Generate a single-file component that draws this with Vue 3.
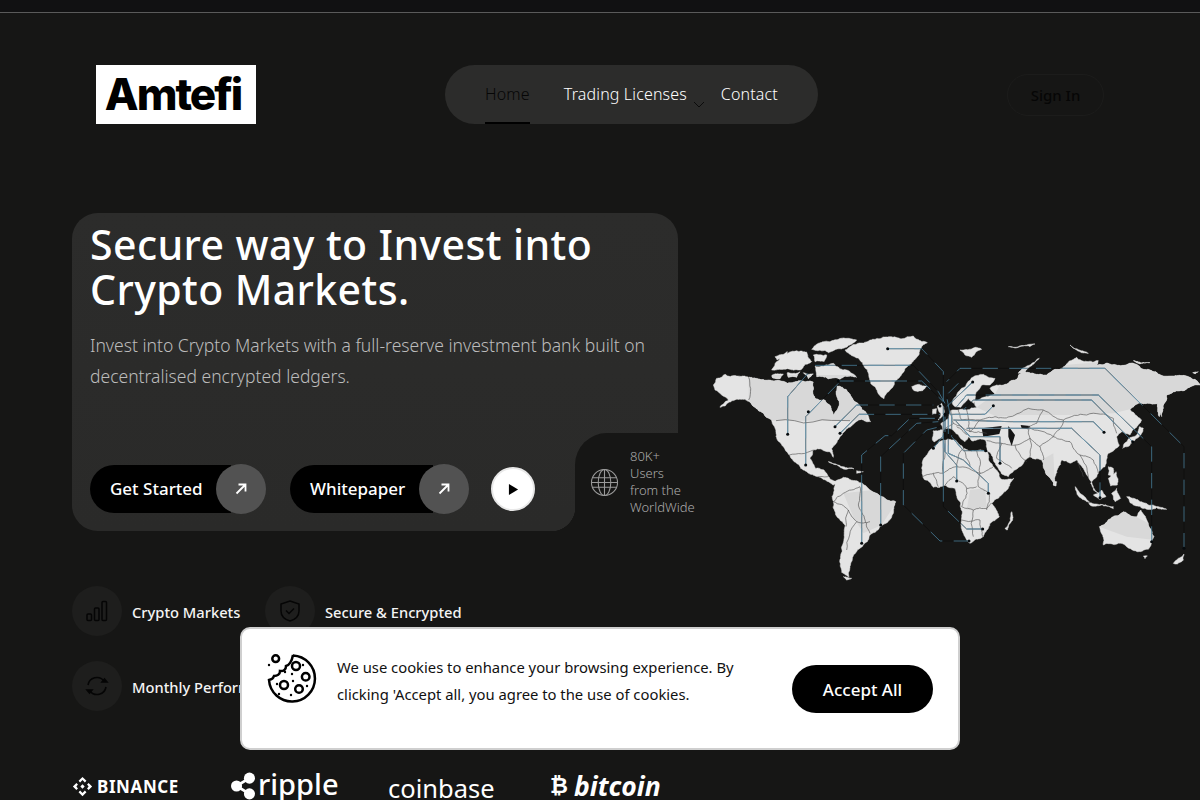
<script setup>
const baseLand = [
  // North America
  '40,195 50,175 75,163 110,168 145,172 180,178 210,180 240,182 262,190 300,182 340,186 338,215 345,235 375,240 392,258 400,285 412,270 418,245 408,215 412,198 440,210 455,232 478,255 500,280 512,305 485,298 468,305 450,322 428,340 412,362 395,385 400,412 388,395 365,388 340,390 330,415 345,445 372,450 385,470 415,490 400,495 385,485 355,470 320,455 290,430 268,405 250,380 228,350 215,300 190,280 165,262 135,238 105,240 75,258 60,262 85,240 65,225 45,210',
  // Greenland
  '435,90 470,72 510,60 570,50 640,48 682,68 662,85 648,115 615,145 600,170 575,205 552,236 535,222 512,190 502,150 488,128 458,108',
  // South America
  '408,482 430,472 470,482 500,500 530,520 587,545 577,585 547,615 517,640 502,665 472,690 457,720 447,772 425,757 422,715 433,650 436,615 403,570 396,530',
  // Africa
  '665,445 680,405 700,382 725,362 765,360 790,385 830,392 862,395 880,440 905,478 942,475 925,505 895,535 875,550 898,590 870,610 850,650 810,670 795,650 785,600 782,550 765,505 735,495 700,502 672,478',
  // Eurasia
  '697,360 700,332 728,330 722,312 745,295 752,272 775,270 800,270 830,262 822,240 850,232 885,222 870,205 890,195 925,190 950,178 965,155 1000,160 1040,165 1060,150 1095,138 1130,112 1195,122 1190,135 1250,135 1300,130 1350,150 1420,168 1470,172 1500,195 1440,212 1400,225 1385,265 1378,290 1372,250 1345,250 1315,250 1290,268 1325,300 1310,322 1290,345 1265,335 1250,350 1258,375 1225,400 1215,440 1195,460 1172,490 1195,520 1180,510 1165,470 1150,445 1130,420 1110,430 1085,420 1065,470 1062,497 1040,465 1025,420 990,410 975,420 960,440 925,470 905,462 880,420 862,392 858,362 815,362 805,350 795,365 775,345 750,325 735,325 728,355 702,366',
  // Scandinavia
  '757,250 775,215 810,180 850,163 885,175 870,195 845,195 830,215 822,250 805,235 792,250 782,262 762,258',
  // UK / Ireland / Iceland
  '712,258 725,250 732,285 715,300 722,280', '698,268 710,266 708,282 696,284', '635,200 655,193 680,198 668,212 642,212',
  // Australia / NZ / Madagascar
  '1198,620 1235,592 1270,575 1310,590 1322,570 1345,610 1362,650 1345,688 1305,692 1270,672 1210,675', '1420,730 1445,710 1452,702 1450,720 1432,732', '915,625 935,575 938,600 922,630',
  // Japan, Indonesia, Philippines, Kamchatka
  '1268,385 1300,365 1325,340 1330,325 1318,320 1310,345 1272,372', '1125,500 1168,545 1160,545 1130,515', '1180,525 1205,510 1218,530 1198,538', '1165,548 1240,560 1240,566 1175,558', '1280,530 1345,555 1400,568 1340,568 1290,548', '1225,475 1248,455 1252,495 1232,498', '1235,520 1250,505 1262,535 1245,545', '1225,440 1240,445 1238,470 1225,465', '1062,482 1070,485 1068,498 1060,495', '1375,250 1400,235 1385,290',
  // Caribbean
  '385,425 430,440 462,447 420,442', '470,452 490,455 470,460',
  // Canadian arctic
  '215,150 240,112 290,92 320,96 335,125 300,150 250,148', '335,88 370,65 440,55 470,60 430,85 385,98', '345,138 400,130 440,150 470,172 420,178 350,170', '260,222 280,212 272,228 250,230', '310,158 340,162 325,176', '215,168 250,162 240,176 218,174', '262,158 300,155 290,172 265,172', '340,105 380,105 372,125 345,125', '225,110 262,95 255,112 232,120',
  // Arctic Russia / Svalbard
  '780,90 825,82 845,88 815,112 795,105', '925,80 1005,72 990,80 935,82', '955,160 1018,115 1010,122 975,155', '1110,75 1165,100 1130,90', '1300,122 1350,128 1320,132', '1478,158 1495,155 1485,162', '430,770 455,775 440,780', '1330,708 1342,708 1335,716',
]
const tint = [
  '146,165 500,165 500,302 146,302',
  '830,262 885,222 925,150 1500,100 1500,220 1378,290 1315,250 1290,268 1240,280 1100,285 960,285 890,290',
  '430,520 520,510 590,545 545,615 490,640 460,590',
  '810,510 855,505 860,560 800,570',
  '1198,620 1270,570 1345,610 1365,660 1280,650',
  '1025,420 1060,400 1065,500 1040,480',
]
const baseBorders = [
  'M146,172L146,240','M228,302L450,302','M268,405L340,390','M355,470L385,470','M430,520L400,545L445,570L438,620','M430,520L480,500L475,555L495,600L510,640','M445,570L470,605L440,690','M470,605L510,605',
  'M665,470L700,460L730,460L770,440L790,385','M730,460L730,365','M770,440L840,460L880,440','M840,460L835,500L870,520','M700,460L715,500','M735,495L760,470L800,505L830,500','M800,505L785,560L820,570L860,565L875,550','M785,600L840,600L848,650','M820,570L820,650','M870,520L860,570','M790,385L810,440','M830,392L840,460',
  'M752,272L760,310L810,335L840,300L885,290L930,290','M775,270L785,300L840,300','M800,270L810,335','M735,325L760,310','M770,320L800,345','M810,335L860,340','M860,362L905,370L945,375L980,425','M945,375L990,355L1020,380L1030,420','M990,355L990,410','M1020,380L1060,350L1110,365L1140,405','M930,290L985,265L1030,270L1090,300L1160,285L1240,295L1250,340','M1030,270L1010,310L985,320L990,355','M1090,300L1060,350','M985,320L1060,350','M1140,405L1165,470','M1140,405L1180,420L1195,460','M905,370L890,415L935,445','M1130,420L1150,470',
]
function noise(a, b) {
  const v = Math.sin(a * 12.9898 + b * 78.233) * 43758.5453
  return v - Math.floor(v) - 0.5
}
function split(a, b, depth, amp) {
  if (depth === 0) return [a]
  const dx = b[0] - a[0], dy = b[1] - a[1]
  const len = Math.hypot(dx, dy)
  const n = noise(a[0] + b[0], a[1] + b[1]) * len * amp
  const mid = [(a[0] + b[0]) / 2 - (dy / (len || 1)) * n, (a[1] + b[1]) / 2 + (dx / (len || 1)) * n]
  return [...split(a, mid, depth - 1, amp), ...split(mid, b, depth - 1, amp)]
}
const fmt = (pts) => pts.map((p) => p[0].toFixed(1) + ',' + p[1].toFixed(1)).join(' ')
const land = baseLand.map((s) => {
  const pts = s.split(' ').map((p) => p.split(',').map(Number))
  const out = []
  pts.forEach((p, i) => {
    const q = pts[(i + 1) % pts.length]
    out.push(...split(p, q, Math.hypot(q[0] - p[0], q[1] - p[1]) > 25 ? 4 : 2, 0.24))
  })
  return fmt(out)
})
const borders = baseBorders.flatMap((s) => s.split('M').filter(Boolean)).map((s) => {
  const pts = s.split('L').map((p) => p.split(',').map(Number))
  const out = []
  for (let i = 0; i < pts.length - 1; i++) out.push(...split(pts[i], pts[i + 1], 3, 0.2))
  out.push(pts[pts.length - 1])
  return fmt(out)
})
const lineRoutes = [
  'M563,86H665L730,155V283','M345,136H640L715,215L735,250','M263,343V230L345,136','M415,183H665L730,245','M317,435V290L415,190','M405,320L470,255H700','M420,340L477,283H720','M485,670V405L555,347H575L630,295H720','M542,615V410L650,310L715,305','M807,663H720L610,555V400L680,330L720,320','M848,627H800L730,560V285','M700,385L735,340','M770,483V435L735,395V285','M865,520V490L790,420L745,400V285','M857,392H790L755,350V285','M900,430V350H810L765,300','M1212,337L1180,305H930L760,300','M1200,533V405L1115,325H800','M1298,365L1175,240H820L790,270','M1355,665V380L1195,225H800L770,260','M1452,685V380L1215,145H780L740,185','M880,257L855,283H750','M818,186L740,260','M775,190L745,220','M750,283L740,230',
]
const dots = [[563,86],[263,343],[415,183],[317,435],[325,275],[405,320],[420,340],[485,670],[542,615],[807,663],[848,627],[700,385],[770,483],[865,520],[857,392],[900,430],[1212,337],[1200,533],[1298,365],[1355,665],[1452,685],[880,257],[818,186],[735,283],[720,258]]
const features = [
  { label: 'Crypto Markets', icon: 'bars' },
  { label: 'Secure & Encrypted', icon: 'shield' },
  { label: 'Monthly Performance', icon: 'sync' },
]
const rings = [[29,13,4],[38.7,23.7,3.8],[17,32,4],[32,36,3.8],[8.7,5.7,3.4]]
const specks = [[2,12],[18,19],[25,21],[10,31],[26,28],[24,42],[40,33],[36,12],[12,41]]
</script>

<template>
  <div class="page">
    <div class="topbar"></div>
    <header class="header">
      <div class="logo">Amtefi</div>
      <nav class="nav">
        <a class="nav-link active">Home</a>
        <a class="nav-link has-caret">Trading Licenses
          <svg class="caret" viewBox="0 0 12 7" width="12" height="7"><path d="M1 1l5 5 5-5" fill="none" stroke="#0b0b0b" stroke-width="1"/></svg>
        </a>
        <a class="nav-link">Contact</a>
      </nav>
      <button class="signin">Sign In</button>
    </header>

    <section class="hero">
      <div class="card">
        <h1>Secure way to Invest into<br>Crypto Markets.</h1>
        <p class="lead">Invest into Crypto Markets with a full-reserve investment bank built on decentralised encrypted ledgers.</p>
        <div class="actions">
          <a class="pill">Get Started
            <span class="pill-arrow"><svg viewBox="0 0 14 14" width="14" height="14"><path d="M2.5 11.5L11 3M4.5 2.500h7v7" fill="none" stroke="#fff" stroke-width="1.800"/></svg></span>
          </a>
          <a class="pill pill-two">Whitepaper
            <span class="pill-arrow"><svg viewBox="0 0 14 14" width="14" height="14"><path d="M2.5 11.5L11 3M4.5 2.500h7v7" fill="none" stroke="#fff" stroke-width="1.800"/></svg></span>
          </a>
          <span class="play"><svg viewBox="0 0 12 14" width="11" height="13"><path d="M1 1l10 6-10 6z" fill="#000"/></svg></span>
        </div>
        <div class="users">
          <svg viewBox="0 0 30 30" width="29" height="29" fill="none" stroke="#9a9a9a" stroke-width="1.1">
            <circle cx="15" cy="15" r="13.5"/><ellipse cx="15" cy="15" rx="6.5" ry="13.5"/><path d="M15 1.5v27M2.5 10h25M2.5 20h25M1.5 15h27"/>
          </svg>
          <span class="users-text">80K+<br>Users<br>from the<br>WorldWide</span>
        </div>
      </div>

      <svg class="map" viewBox="0 0 1500 810" width="500" height="270">
        <defs>
          <clipPath id="landclip"><polygon v-for="(p, i) in land" :key="i" :points="p"/></clipPath>
        </defs>
        <polygon v-for="(p, i) in land" :key="i" :points="p" fill="#e4e4e4" stroke="#e4e4e4" stroke-width="1.500"/>
        <g clip-path="url(#landclip)">
          <polygon v-for="(p, i) in tint" :key="'t' + i" :points="p" fill="#d8d8d8"/>
        </g>
        <path d="M845,325L905,318L898,342L850,350Z M925,318L945,345L935,378L925,350Z M962,315L990,318L985,328L965,325Z" fill="#161616"/>
        <polyline v-for="(b, i) in borders" :key="'b' + i" :points="b" fill="none" stroke="#4a4a4a" stroke-width="1.800"/>
        <g fill="none" stroke-width="2.200">
          <path v-for="(r, i) in lineRoutes" :key="'k' + i" :d="r" stroke="#0c0c0c"/>
          <path v-for="(r, i) in lineRoutes" :key="'c' + i" :d="r" stroke="#4f8ba8" stroke-dasharray="46 34"/>
          <g clip-path="url(#landclip)">
            <path v-for="(r, i) in lineRoutes" :key="'l' + i" :d="r" stroke="#7fa6ba"/>
          </g>
        </g>
        <circle v-for="(d, i) in dots" :key="'d' + i" :cx="d[0]" :cy="d[1]" r="4.500" fill="#050a0d"/>
      </svg>
    </section>

    <section class="features">
      <div v-for="f in features" :key="f.label" class="feature">
        <span class="feature-icon">
          <svg v-if="f.icon === 'bars'" viewBox="0 0 24 24" width="24" height="24" fill="none" stroke="#050505" stroke-width="1.5">
            <rect x="2" y="15" width="4.5" height="6.5" rx="1"/><rect x="9.5" y="9" width="4.5" height="12.5" rx="1"/><rect x="17" y="2.5" width="4.5" height="19" rx="1"/>
          </svg>
          <svg v-else-if="f.icon === 'shield'" viewBox="0 0 24 24" width="24" height="24" fill="none" stroke="#050505" stroke-width="1.5">
            <path d="M12 2l9 3v7c0 5-4 8.500-9 10-5-1.500-9-5-9-10V5z"/><path d="M8 11.500l3 3 5-5"/>
          </svg>
          <svg v-else viewBox="0 0 24 24" width="24" height="24" fill="none" stroke="#050505" stroke-width="1.6">
            <path d="M3 11a9 9 0 0 1 16-4M21 13a9 9 0 0 1-16 4"/><path d="M17 8h5l-2.500-3zM7 16H2l2.500 3z" fill="#050505"/>
          </svg>
        </span>
        <span class="feature-label">{{ f.label }}</span>
      </div>
    </section>

    <section class="brands">
      <span class="brand binance">
        <svg viewBox="0 0 24 24" width="21" height="21" fill="#fff"><path d="M12 1l4.500 4.500-1.800 1.800L12 4.600 9.300 7.300 7.500 5.500zM5 8l1.800 1.800L5 12l1.800 2.200L5 16l-4-4zM19 8l4 4-4 4-1.800-1.800L19 12l-1.800-2.200zM12 9.500l2.500 2.500-2.500 2.500L9.500 12zM7.500 18.500l1.800-1.800 2.700 2.700 2.700-2.700 1.800 1.800L12 23z"/></svg>
        BINANCE
      </span>
      <span class="brand ripple">
        <svg viewBox="0 0 26 30" width="24" height="28" fill="#fff"><circle cx="6" cy="15" r="6"/><circle cx="20" cy="6.500" r="6"/><circle cx="20" cy="23.500" r="6"/><path d="M6 15L20 6.500M6 15l14 8.500" stroke="#fff" stroke-width="3"/></svg>
        <span class="ripple-word">ripple</span>
      </span>
      <span class="brand coinbase">coinbase</span>
      <span class="brand bitcoin"><span class="btc">₿</span> bitcoin</span>
    </section>

    <aside class="cookie">
      <svg class="cookie-icon" viewBox="0 0 50 50" width="50" height="50" fill="none" stroke="#000" stroke-width="2.500">
        <path d="M26 2.500A23 23 0 1 1 2 27c2.500-.500 4.500-2 5-4 3 0 6-1.500 6-5 4 .500 6-2 6-5 3-.500 6-5 7-11z"/>
        <circle v-for="(c, i) in rings" :key="i" :cx="c[0]" :cy="c[1]" :r="c[2]"/>
        <circle v-for="(s, i) in specks" :key="'s' + i" :cx="s[0]" :cy="s[1]" r="1.200" fill="#000" stroke="none"/>
      </svg>
      <p class="cookie-text">We use cookies to enhance your browsing experience. By clicking 'Accept all, you agree to the use of cookies.</p>
      <button class="accept">Accept All</button>
    </aside>
  </div>
</template>

<style>
html, body { margin: 0; background: #161616; }
</style>

<style scoped>
.page {
  position: relative;
  height: 800px;
  overflow: hidden;
  background: #161615;
  color: #fff;
  font-family: "Noto Sans", sans-serif;
}
.topbar { height: 12px; background: #111112; border-bottom: 1px solid #5a5a5a; }

.header {
  display: flex;
  align-items: flex-start;
  justify-content: space-between;
  padding: 52px 96px 0;
  height: 59px;
}
.logo {
  width: 160px;
  height: 59px;
  box-sizing: border-box;
  padding-right: 6px;
  background: #fff;
  color: #000;
  font: 800 44px/59px Inter, sans-serif;
  letter-spacing: -2px;
  text-align: center;
}
.nav {
  display: flex;
  gap: 34px;
  height: 59px;
  padding: 0 40px;
  border-radius: 30px;
  background: #2c2c2b;
  box-sizing: border-box;
}
.nav-link {
  position: relative;
  font-size: 16px;
  letter-spacing: .15px;
  line-height: 59px;
  color: #fff;
  font-weight: 300;
  white-space: nowrap;
}
.nav-link.active { color: #060606; border-bottom: 2px solid #000; height: 57px; }
.caret { position: absolute; left: 129px; top: 36px; }
.signin {
  margin-top: 9px;
  width: 97px;
  height: 42px;
  border-radius: 21px;
  border: 1px solid #1c1c1b;
  background: transparent;
  color: #060606;
  font: 500 15px "Noto Sans", sans-serif;
}

.hero {
  display: flex;
  align-items: flex-start;
  gap: 22px;
  height: 318px;
  padding-left: 72px;
  margin-top: 89px;
}
.card {
  position: relative;
  flex: none;
  width: 606px;
  height: 318px;
  box-sizing: border-box;
  padding: 9px 18px 0;
  border-radius: 26px;
  background: linear-gradient(180deg, #2c2c2b, #2a2a29);
}
h1 {
  margin: 0;
  font-size: 41px;
  letter-spacing: .4px;
  line-height: 45px;
  font-weight: 500;
  white-space: nowrap;
}
.lead {
  margin: 18px 0 0;
  font-size: 17.500px;
  line-height: 31px;
  color: #bcbcbc;
  font-weight: 300;
  width: 570px;
}
.actions {
  position: absolute;
  left: 18px;
  top: 252px;
  display: flex;
  align-items: center;
}
.pill {
  position: relative;
  width: 176px;
  height: 48px;
  box-sizing: border-box;
  padding-left: 20px;
  border-radius: 24px 0 0 24px;
  font-size: 17px;
  font-weight: 500;
  line-height: 48px;
  background: linear-gradient(90deg, #000 80%, transparent 80%);
}
.pill-two { margin-left: 24px; width: 179px; }
.pill-arrow {
  position: absolute;
  right: 0;
  top: -1px;
  display: flex;
  align-items: center;
  justify-content: center;
  width: 50px;
  height: 50px;
  border-radius: 50%;
  background: #525252;
}
.play {
  display: flex;
  align-items: center;
  justify-content: center;
  margin-left: 22px;
  width: 40px;
  height: 40px;
  border: 2px solid #e8e8e8;
  border-radius: 50%;
  background: #fff;
}
.users {
  position: absolute;
  right: -18px;
  bottom: 0;
  display: flex;
  align-items: center;
  gap: 11px;
  width: 121px;
  height: 98px;
  box-sizing: border-box;
  padding: 0 0 0 15px;
  border-radius: 32px 0 0 0;
  background: #161615;
}
.users::before {
  content: "";
  position: absolute;
  left: -24px;
  bottom: 0;
  width: 24px;
  height: 24px;
  background: radial-gradient(circle at 0 0, #2a2a29 24px, #161615 24.500px);
}
.users-text { font-size: 13px; line-height: 17px; color: #aaa; font-weight: 300; white-space: nowrap; }
.map { flex: none; margin-top: 107px; }

.features {
  display: grid;
  grid-template-columns: 193px 1fr;
  row-gap: 25px;
  padding-left: 72px;
  margin-top: 55px;
}
.feature { display: flex; align-items: center; gap: 10px; height: 50px; }
.feature-icon {
  flex: none;
  display: flex;
  align-items: center;
  justify-content: center;
  width: 50px;
  height: 50px;
  border-radius: 50%;
  background: #1e1e1d;
}
.feature-label { padding-top: 2px; font-size: 14.700px; font-weight: 500; color: #f4f4f4; white-space: nowrap; }

.brands {
  display: flex;
  align-items: center;
  padding-left: 72px;
  margin-top: 59px;
  height: 32px;
  color: #fff;
}
.brand { display: inline-flex; align-items: center; white-space: nowrap; }
.brand svg { flex: none; }
.binance { width: 159px; gap: 4px; font: 700 17px "Noto Sans", sans-serif; letter-spacing: .6px; }
.ripple { width: 157px; gap: 3px; font: 500 29px/32px "Noto Sans", sans-serif; }
.ripple-word { margin-top: -4px; }
.coinbase { width: 162px; padding-top: 3px; font: 400 25.500px/32px "Noto Sans", sans-serif; }
.bitcoin { font: italic 700 26.500px/32px "Noto Sans", sans-serif; gap: 6px; }
.btc { font: 700 22px "DejaVu Sans", sans-serif; }

.cookie {
  position: absolute;
  left: 240px;
  top: 627px;
  width: 720px;
  height: 123px;
  box-sizing: border-box;
  padding: 24px 25px 0 25px;
  display: flex;
  align-items: flex-start;
  border: 2px solid #cfcfcf;
  border-radius: 10px;
  background: #fff;
  color: #111;
}
.cookie-icon { flex: none; }
.cookie-text {
  flex: none;
  width: 425px;
  margin: 1px 0 0 20px;
  font-size: 14.800px;
  line-height: 27px;
  color: #111;
}
.accept {
  flex: none;
  width: 141px;
  height: 48px;
  margin: 12px 0 0 30px;
  border: 0;
  border-radius: 24px;
  background: #000;
  color: #fff;
  font: 500 17px "Noto Sans", sans-serif;
}
</style>
